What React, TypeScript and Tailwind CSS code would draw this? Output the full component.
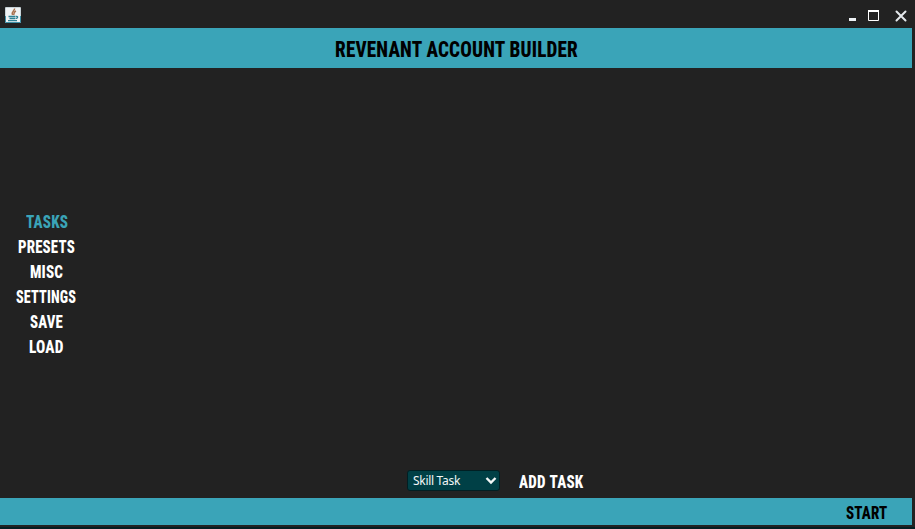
import { useLayoutEffect, useRef, useState } from "react";

type LabelProps = { text: string; width: number; className?: string };

// Condensed display lettering: the text is squeezed horizontally to a set width.
function Condensed({ text, width, className = "" }: LabelProps) {
  const ref = useRef<HTMLSpanElement>(null);
  const [scale, setScale] = useState(0.75);
  useLayoutEffect(() => {
    if (ref.current) setScale(width / ref.current.offsetWidth);
  }, [width, text]);
  return (
    <span
      className={`block whitespace-nowrap font-['Roboto',sans-serif] font-extrabold tracking-[0.2px] [font-stretch:75%] ${className}`}
      style={{ width }}
    >
      <span ref={ref} className="inline-block origin-left" style={{ transform: `scaleX(${scale})` }}>
        {text}
      </span>
    </span>
  );
}

const menu = [
  { text: "TASKS", width: 42 },
  { text: "PRESETS", width: 57 },
  { text: "MISC", width: 33.5 },
  { text: "SETTINGS", width: 60.5 },
  { text: "SAVE", width: 33 },
  { text: "LOAD", width: 35 },
];

function JavaIcon() {
  return (
    <svg className="h-4 w-4" viewBox="0 0 16 16" fill="none">
      <rect width="16" height="16" rx="1" fill="#c9d3d7" />
      <rect x="1" y="1" width="14" height="14" fill="#f1f4f5" />
      <path d="M0.5 9V15.5H15.5V9" stroke="#3f8fa6" />
      <path d="M9.5 1.5C10 4 5.8 4.5 7.5 8M11 4C8 5.2 9.8 6.5 8.5 8" stroke="#a8714f" strokeWidth="1.5" />
      <path d="M3.5 9.5H10.5M4.5 11.5H10M3 13.6H12M11 9.5C13.5 9 13 11.5 10.5 11.5" stroke="#2e8296" strokeWidth="1.3" />
    </svg>
  );
}

export default function App() {
  return (
    <div className="flex h-[529px] w-[915px] flex-col overflow-hidden bg-[#222222]">
      <header className="flex h-7 shrink-0 items-start justify-between pl-[5px] pr-2 pt-[7px]">
        <JavaIcon />
        <svg className="h-4 w-[60px]" viewBox="0 0 60 16" fill="none">
          <rect x="2" y="11" width="7" height="3" fill="#eef2f6" />
          <path d="M21.5 4V13.5H31.5V4" stroke="#fff" />
          <rect x="21" y="3" width="11" height="2" fill="#fff" />
          <path d="M49.5 4.5L58.5 13.5M58.5 4.5L49.5 13.5" stroke="#e4e8ec" strokeWidth="2" strokeLinecap="round" />
        </svg>
      </header>

      <div className="mr-[3px] flex h-10 shrink-0 items-center justify-center bg-[#3aa4b8] pt-0.5">
        <Condensed text="REVENANT ACCOUNT BUILDER" width={243} className="text-[22.5px] leading-10 text-black" />
      </div>

      <main className="flex grow">
        <nav className="flex w-[93px] flex-col items-center pt-[141px]">
          {menu.map((item, i) => (
            <Condensed
              key={item.text}
              {...item}
              className={`h-[25px] text-lg leading-[25px] ${i === 0 ? "text-[#3aa4b8]" : "text-white"}`}
            />
          ))}
        </nav>
        <section className="flex grow items-end pb-[7px] pl-[314px]">
          <button className="flex h-[21px] w-[93px] items-center justify-between rounded-[3px] border border-[#001f23] bg-[#004046] pl-[5px] pr-0.5 font-['Noto_Sans',sans-serif] text-xs text-[#f2f6f6]">
            <span className="tracking-[-0.3px]">Skill Task</span>
            <svg className="h-2.5 w-3" viewBox="0 0 12 10" fill="none">
              <path d="M1.5 2L6 6.5L10.5 2" stroke="#f2f6f6" strokeWidth="2.4" />
            </svg>
          </button>
          <Condensed text="ADD TASK" width={64.5} className="ml-[19px] h-[21px] text-lg leading-[23px] text-white [word-spacing:1px]" />
        </section>
      </main>

      <footer className="mr-[3px] flex h-[27px] shrink-0 justify-end bg-[#3aa4b8] pr-[24.5px]">
        <Condensed text="START" width={41.5} className="text-lg leading-[29px] text-black" />
      </footer>
      <div className="h-1 shrink-0 border-b-2 border-[#041d21]" />
    </div>
  );
}
